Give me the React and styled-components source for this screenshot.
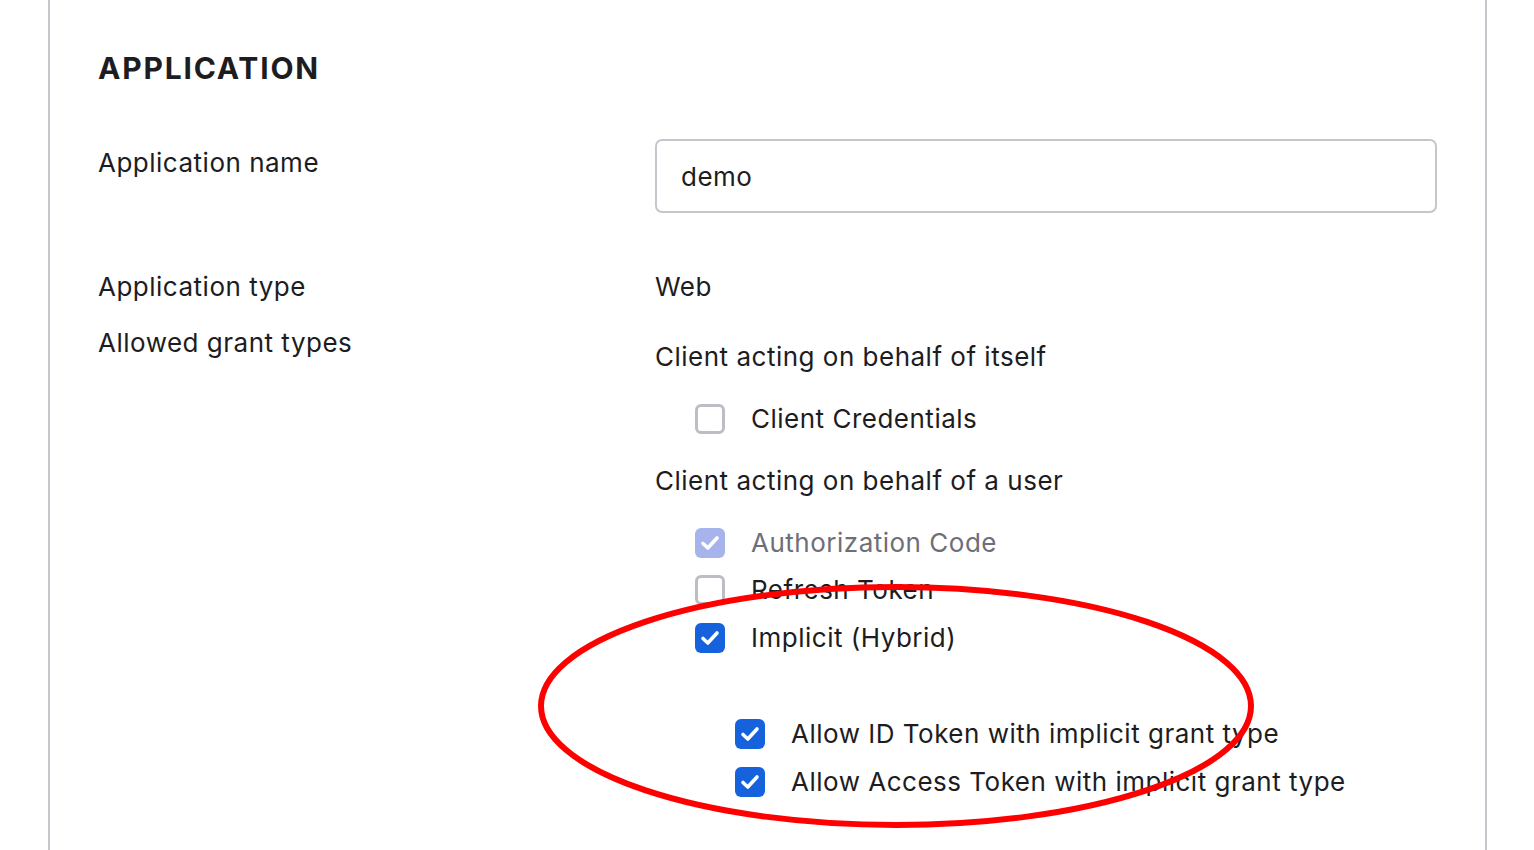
import React from "react";
import styled, { createGlobalStyle } from "styled-components";

const Global = createGlobalStyle`
  html, body { margin: 0; padding: 0; background: #fff; }
  body { font-family: Inter, "Noto Sans", sans-serif; color: #1d1d21; overflow: hidden; }
`;

const Page = styled.div`
  position: relative;
  height: 850px;
  overflow: hidden;
`;

const Panel = styled.section`
  box-sizing: border-box;
  margin-left: 48px;
  width: 1439px;
  min-height: 850px;
  border-left: 2px solid #c5c5cc;
  border-right: 2px solid #c5c5cc;
  padding: 50px 48px 0;
`;

const Heading = styled.h2`
  margin: 0 0 53px;
  font-size: 30px;
  line-height: 36px;
  font-weight: 700;
  letter-spacing: 1.8px;
`;

const Row = styled.div`
  display: grid;
  grid-template-columns: 557px 1fr;
  margin-top: ${(p) => p.$mt || 0}px;
`;

const text = `
  font-size: 26px;
  line-height: 30px;
  letter-spacing: 0.5px;
`;

const Label = styled.div`
  ${text}
  padding-top: ${(p) => p.$pt || 0}px;
`;

const Input = styled.input`
  box-sizing: border-box;
  width: 100%;
  height: 74px;
  border: 2px solid #c5c5cc;
  border-radius: 7px;
  padding: 0 24px;
  font-family: inherit;
  ${text}
  color: #1d1d21;
  outline: none;
`;

const Value = styled.div`
  ${text}
`;

const Group = styled.div`
  display: flex;
  flex-direction: column;
  padding-top: 14px;
`;

const GroupTitle = styled.div`
  ${text}
  margin-top: ${(p) => p.$mt || 0}px;
`;

const CheckRow = styled.label`
  display: flex;
  align-items: center;
  gap: 26px;
  margin-left: ${(p) => p.$indent || 40}px;
  margin-top: ${(p) => p.$mt || 0}px;
  ${text}
  color: ${(p) => (p.$disabled ? "#6e6e78" : "#1d1d21")};
`;

const Box = styled.span`
  box-sizing: border-box;
  flex: none;
  width: 30px;
  height: 30px;
  border-radius: 6px;
  display: flex;
  align-items: center;
  justify-content: center;
  background: ${(p) => (p.$checked ? (p.$disabled ? "#a7b4ec" : "#1662dd") : "#fff")};
  border: ${(p) => (p.$checked ? "none" : "3px solid #bdbdc5")};
`;

const Annotation = styled.svg`
  position: absolute;
  left: 0;
  top: 0;
  pointer-events: none;
`;

function Checkbox({ checked, disabled, label, indent, mt }) {
  return (
    <CheckRow $disabled={disabled} $indent={indent} $mt={mt}>
      <Box $checked={checked} $disabled={disabled}>
        {checked && (
          <svg width="22" height="18" viewBox="0 0 22 18">
            <polyline
              points="4,9.5 8.8,14 18,4"
              fill="none"
              stroke="#fff"
              strokeWidth="3.6"
              strokeLinecap="round"
              strokeLinejoin="round"
            />
          </svg>
        )}
      </Box>
      {label}
    </CheckRow>
  );
}

export default function App() {
  return (
    <Page>
      <Global />
      <Panel>
        <Heading>APPLICATION</Heading>
        <Row>
          <Label $pt={9}>Application name</Label>
          <Input defaultValue="demo" />
        </Row>
        <Row $mt={59}>
          <Label>Application type</Label>
          <Value>Web</Value>
        </Row>
        <Row $mt={26}>
          <Label>Allowed grant types</Label>
          <Group>
            <GroupTitle>Client acting on behalf of itself</GroupTitle>
            <Checkbox mt={32} label="Client Credentials" />
            <GroupTitle $mt={32}>Client acting on behalf of a user</GroupTitle>
            <Checkbox mt={32} checked disabled label="Authorization Code" />
            <Checkbox mt={17} label="Refresh Token" />
            <Checkbox mt={18} checked label="Implicit (Hybrid)" />
            <Checkbox mt={66} indent={80} checked label="Allow ID Token with implicit grant type" />
            <Checkbox mt={18} indent={80} checked label="Allow Access Token with implicit grant type" />
          </Group>
        </Row>
      </Panel>
      <Annotation width="1534" height="850" viewBox="0 0 1534 850">
        <ellipse cx="896" cy="706" rx="355" ry="119" fill="none" stroke="#ff0000" strokeWidth="6" />
      </Annotation>
    </Page>
  );
}
